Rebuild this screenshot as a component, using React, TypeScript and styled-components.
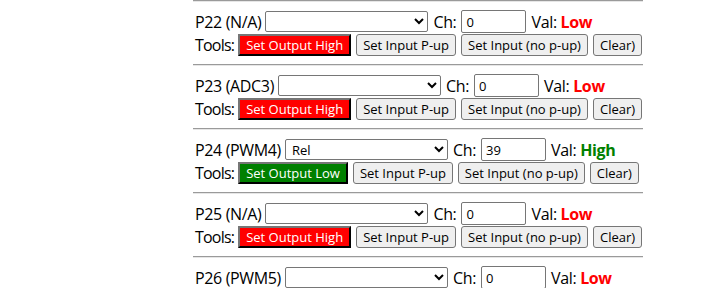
import React from "react";
import styled, { createGlobalStyle } from "styled-components";

const GlobalStyle = createGlobalStyle`
  html, body {
    margin: 0;
    padding: 0;
    background: #fff;
    color: #000;
    font-family: "Open Sans", "Noto Sans", sans-serif;
    font-size: 16px;
  }
`;

interface Pin {
  name: string;
  func: string;
  mode: string;
  ch: string;
  high: boolean;
}

const pins: Pin[] = [
  { name: "P22", func: "N/A", mode: "", ch: "0", high: false },
  { name: "P23", func: "ADC3", mode: "", ch: "0", high: false },
  { name: "P24", func: "PWM4", mode: "Rel", ch: "39", high: true },
  { name: "P25", func: "N/A", mode: "", ch: "0", high: false },
  { name: "P26", func: "PWM5", mode: "", ch: "0", high: false },
];

const Page = styled.div`
  width: 450px;
  margin-left: 193px;
`;

const Divider = styled.hr`
  margin: 0 0 8px;
  height: 0;
  border: 0;
  border-top: 1px solid #9a9a9a;
  border-bottom: 1px solid #e6e6e6;
`;

const PinBlock = styled.div`
  margin-bottom: 8px;
`;

const Line = styled.div`
  display: flex;
  align-items: center;
  height: 23px;
  padding-left: 2px;
  white-space: nowrap;
  gap: 4px;
`;

const Label = styled.span`
  font-size: 16px;
  letter-spacing: -0.35px;
`;

const ToolsLabel = styled(Label)`
  letter-spacing: -0.8px;
`;

const ModeSelect = styled.select`
  width: 163px;
  height: 21px;
  margin: 0 1px 0 0;
  padding: 0 2px;
  border: 1px solid #767676;
  border-radius: 2px;
  background: #fff;
  font-family: "Open Sans", sans-serif;
  font-size: 13px;
  color: #000;
`;

const ChInput = styled.input`
  box-sizing: border-box;
  width: 65px;
  height: 23px;
  margin: 0 1px;
  padding: 0 4px;
  border: 1px solid #767676;
  border-radius: 2px;
  font-family: "Open Sans", sans-serif;
  font-size: 13px;
  color: #000;
`;

const Value = styled.b<{ $high: boolean }>`
  color: ${(p) => (p.$high ? "#008000" : "#f00")};
  font-weight: 700;
`;

const ToolButton = styled.button<{ $tone?: "red" | "green" }>`
  box-sizing: border-box;
  height: 22px;
  padding: 0 6px;
  margin: 0 1px 0 0;
  font-family: "Open Sans", sans-serif;
  font-size: 13px;
  white-space: nowrap;
  cursor: pointer;
  border-radius: ${(p) => (p.$tone ? "0" : "3px")};
  border: ${(p) => (p.$tone ? "2px outset #222" : "1px solid #767676")};
  background: ${(p) =>
    p.$tone === "red" ? "#f00" : p.$tone === "green" ? "#008000" : "#efefef"};
  color: ${(p) => (p.$tone ? "#fff" : "#000")};
`;

const PinRow = ({ pin }: { pin: Pin }) => (
  <PinBlock>
    <Line>
      <Label>
        {pin.name} ({pin.func})
      </Label>
      <ModeSelect defaultValue={pin.mode}>
        <option value=""></option>
        <option value="Rel">Rel</option>
      </ModeSelect>
      <Label>Ch:</Label>
      <ChInput defaultValue={pin.ch} />
      <Label>
        Val: <Value $high={pin.high}>{pin.high ? "High" : "Low"}</Value>
      </Label>
    </Line>
    <Line>
      <ToolsLabel>Tools:</ToolsLabel>
      {pin.high ? (
        <ToolButton $tone="green">Set Output Low</ToolButton>
      ) : (
        <ToolButton $tone="red">Set Output High</ToolButton>
      )}
      <ToolButton>Set Input P-up</ToolButton>
      <ToolButton>Set Input (no p-up)</ToolButton>
      <ToolButton>Clear)</ToolButton>
    </Line>
  </PinBlock>
);

export default function App() {
  return (
    <>
      <GlobalStyle />
      <Page>
        {pins.map((pin) => (
          <React.Fragment key={pin.name}>
            <Divider />
            <PinRow pin={pin} />
          </React.Fragment>
        ))}
      </Page>
    </>
  );
}
